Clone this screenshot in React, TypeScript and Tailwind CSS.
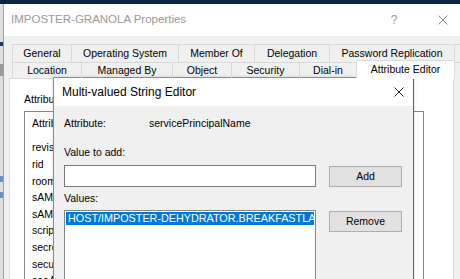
const rowOne = [
  { label: 'General', w: 'w-[59px]' },
  { label: 'Operating System', w: 'w-[107px]' },
  { label: 'Member Of', w: 'w-[76px]' },
  { label: 'Delegation', w: 'w-[75px]' },
  { label: 'Password Replication', w: 'w-[125px]' },
];

const rowTwo = [
  { label: 'Location', w: 'w-[69px]' },
  { label: 'Managed By', w: 'w-[91px]' },
  { label: 'Object', w: 'w-[59px]' },
  { label: 'Security', w: 'w-[68px]' },
  { label: 'Dial-in', w: 'w-[57px]' },
];

const attributes = [
  'revision',
  'rid',
  'roomNumber',
  'sAMAccountName',
  'sAMAccountType',
  'scriptPath',
  'secretary',
  'securityIdentifier',
  'seeAlso',
];

function ThinX({ className }: { className?: string }) {
  return (
    <svg viewBox="0 0 10 10" className={className} fill="none" stroke="currentColor" strokeWidth="1">
      <path d="M0.5 0.5 L9.5 9.5 M9.5 0.5 L0.5 9.5" />
    </svg>
  );
}

function StringEditor() {
  return (
    <div className="absolute left-[53px] top-[77px] w-[361px] h-[260px] border border-[#8a8a8a] border-r-[#5f5f5f] bg-[#f0f0f0] shadow-[0_0_4px_rgba(0,0,0,0.12)] flex flex-col">
      {/* Title bar */}
      <div className="h-[28px] shrink-0 bg-white flex items-center justify-between pl-[8px] pr-[9px]">
        <span className="text-[12px] text-black">Multi-valued String Editor</span>
        <ThinX className="w-[10px] h-[10px] text-[#222]" />
      </div>

      {/* Body */}
      <div className="pl-[10px] pt-[11px] flex flex-col text-[10.5px] text-black">
        <div className="flex h-[14px] shrink-0 items-center">
          <span className="w-[85px]">Attribute:</span>
          <span>servicePrincipalName</span>
        </div>

        <div className="mt-[15px] h-[14px] shrink-0 flex items-center">Value to add:</div>

        <div className="mt-[5px] flex items-start gap-[13px] shrink-0">
          <div className="w-[252px] h-[22px] bg-white border border-[#7a7a7a]" />
          <button className="mt-[1px] w-[73px] h-[21px] bg-[#e1e1e1] border border-[#adadad] flex items-center justify-center">
            Add
          </button>
        </div>

        <div className="mt-[5px] h-[14px] shrink-0 flex items-center">Values:</div>

        <div className="mt-[4px] flex items-start gap-[13px] shrink-0">
          <div className="w-[252px] h-[120px] bg-white border border-[#828790] p-px">
            <div className="h-[13px] w-[248px] bg-[#0078d7] text-white text-[10.8px] whitespace-nowrap overflow-hidden flex items-center pl-[2px] leading-none">
              HOST/IMPOSTER-DEHYDRATOR.BREAKFASTLAB.LOCAL
            </div>
          </div>
          <button className="mt-[1px] w-[73px] h-[21px] bg-[#e1e1e1] border border-[#adadad] flex items-center justify-center">
            Remove
          </button>
        </div>
      </div>
    </div>
  );
}

export default function App() {
  return (
    <div className="relative w-[460px] h-[279px] overflow-hidden bg-[#0c2444] font-['Liberation_Sans',Arial,sans-serif] flex flex-col">
      {/* Desktop strip on top */}
      <div className="h-[4px] shrink-0" />

      <div className="flex-1 flex min-h-0">
        {/* Sliver of the window behind */}
        <div className="w-[3px] shrink-0 bg-[#dedede] flex flex-col">
          <div className="h-[38px]" />
          <div className="h-[4px] bg-[#1d3560]" />
          <div className="h-[18px]" />
          <div className="h-[12px] bg-[#9a9a9a]" />
          <div className="h-[100px]" />
          <div className="h-[6px] bg-[#6f8fc4]" />
          <div className="h-[10px]" />
          <div className="h-[6px] bg-[#6f8fc4]" />
        </div>

        {/* Properties window */}
        <div className="w-[470px] shrink-0 border-l border-[#a0a0a0] flex flex-col">
          <div className="h-[32px] bg-white flex items-center shrink-0">
            <span className="pl-[7px] text-[11.5px] text-[#999999]">IMPOSTER-GRANOLA Properties</span>
            <span className="ml-auto w-[46px] text-center text-[12px] text-[#999999] mr-[3px]">?</span>
            <div className="w-[46px] flex justify-center">
              <ThinX className="w-[10px] h-[10px] text-[#8a8a8a]" />
            </div>
            <div className="w-[7px]" />
          </div>

          <div className="flex-1 bg-[#f0f0f0] pt-[8px] flex flex-col text-[10.5px] text-black">
            {/* Tab row 1 */}
            <div className="ml-[8px] flex h-[18px] shrink-0 border-l border-t border-[#d9d9d9]">
              {rowOne.map((t) => (
                <div key={t.label} className={`${t.w} border-r border-[#d9d9d9] flex items-center justify-center`}>
                  {t.label}
                </div>
              ))}
            </div>

            {/* Tab row 2 */}
            <div className="ml-[8px] flex h-[16px] shrink-0 border-l border-t border-[#d9d9d9] relative z-10">
              {rowTwo.map((t) => (
                <div key={t.label} className={`${t.w} border-r border-[#d9d9d9] flex items-center justify-center pt-[1px]`}>
                  {t.label}
                </div>
              ))}
              <div className="w-[98px] h-[19px] -mt-[3px] bg-white border-t border-r border-[#d9d9d9] flex items-center justify-center">
                Attribute Editor
              </div>
            </div>

            {/* Tab page */}
            <div className="ml-[5px] w-[445px] flex-1 bg-white border border-[#d9d9d9] pl-[14px] pt-[14px]">
              <div className="h-[14px] flex items-center">Attributes:</div>
              <div className="mt-[4px] w-[400px] h-[200px] border border-[#828790] pl-[7px]">
                <div className="h-[24px] flex items-center">Attribute</div>
                <div className="pt-[4px] flex flex-col">
                  {attributes.map((a) => (
                    <div key={a} className="h-[16.6px] flex items-center">
                      {a}
                    </div>
                  ))}
                </div>
              </div>
            </div>
          </div>
        </div>
      </div>

      <StringEditor />
    </div>
  );
}
